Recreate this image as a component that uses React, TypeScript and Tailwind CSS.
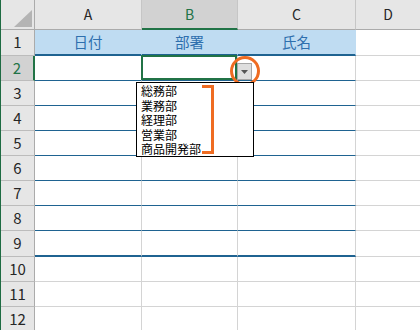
const COLS = ["A", "B", "C"];
const HEADINGS = ["日付", "部署", "氏名"];
const ITEMS = ["総務部", "業務部", "経理部", "営業部", "商品開発部"];
const ROWS = [1, 2, 3, 4, 5, 6, 7, 8, 9, 10, 11, 12];

// column widths, all border-box with a right gridline
const colW = ["w-[107px]", "w-[96px]", "w-[118px]"];

function dataCellClass(row: number) {
  if (row === 1) return "bg-[#bfdcf2] border-b-2 border-b-[#1f6391] border-r border-r-[#bfdcf2]";
  if (row === 9) return "border-b-2 border-b-[#1f6391] border-r border-r-[#d4d4d4]";
  if (row < 9) return "border-b border-b-[#1f6391] border-r border-r-[#d4d4d4]";
  return "border-b border-b-[#d4d4d4] border-r border-r-[#d4d4d4]";
}

export default function App() {
  return (
    <div className="relative flex w-[420px] h-[330px] overflow-hidden bg-white font-['Noto_Sans_CJK_JP',sans-serif]">
      <div className="w-px bg-[#1e6b42]" />
      <div className="flex flex-1 flex-col">
        {/* column headers */}
        <div className="flex h-[30px] shrink-0">
          <div className="relative w-[34px] bg-[#e6e6e6] border-r border-b border-[#ababab]">
            <svg className="absolute inset-0" width="34" height="30">
              <polygon points="13,27 31,27 31,10" fill="#b4b4b4" />
            </svg>
          </div>
          {COLS.map((c, i) =>
            c === "B" ? (
              <div
                key={c}
                className={`${colW[i]} flex items-center justify-center bg-[#d2d2d2] border-r border-r-[#c6c6c6] border-b-2 border-b-[#217346] text-[14px] text-[#217346]`}
              >
                {c}
              </div>
            ) : (
              <div
                key={c}
                className={`${colW[i]} flex items-center justify-center bg-[#e6e6e6] border-r border-r-[#c6c6c6] border-b border-b-[#ababab] text-[14px] text-[#262626]`}
              >
                {c}
              </div>
            )
          )}
          <div className="flex flex-1 items-center justify-center bg-[#e6e6e6] border-b border-b-[#ababab] text-[14px] text-[#262626]">
            D
          </div>
        </div>

        {ROWS.map((r) => (
          <div key={r} className={`flex shrink-0 ${r === 1 || r === 9 ? "h-[26px]" : "h-[25px]"}`}>
            <div
              className={
                r === 2
                  ? "w-[34px] flex items-center justify-center bg-[#d2d2d2] border-b border-b-[#bcbcbc] border-r-2 border-r-[#217346] text-[15px] text-[#217346]"
                  : "w-[34px] flex items-center justify-center bg-[#e6e6e6] border-b border-b-[#bcbcbc] border-r border-r-[#ababab] text-[15px] text-[#262626]"
              }
            >
              {r}
            </div>
            {COLS.map((c, i) => (
              <div
                key={c}
                className={`relative ${colW[i]} flex items-center justify-center text-[14.5px] text-[#2e6fae] ${dataCellClass(r)}`}
              >
                {r === 1 && HEADINGS[i]}
                {r === 2 && c === "B" && (
                  <div className="absolute -left-px -top-px right-0 bottom-0 border-2 border-[#217346]" />
                )}
              </div>
            ))}
            <div className="flex-1 border-b border-b-[#d4d4d4]" />
          </div>
        ))}
      </div>

      {/* validation dropdown button */}
      <div className="absolute left-[237px] top-[63px] flex h-[17px] w-[15px] items-center justify-center border border-[#a6a6a6] bg-[#dedede]">
        <svg width="7" height="4" viewBox="0 0 7 4">
          <polygon points="0,0 7,0 3.5,4" fill="#555" />
        </svg>
      </div>
      <div className="absolute left-[230px] top-[56px] h-[30px] w-[30px] rounded-full border-[3px] border-[#ef6c22]" />

      {/* dropdown list */}
      <div className="absolute left-[136px] top-[82px] h-[75px] w-[118px] border border-black bg-white pl-[4px] pt-px text-[12px] leading-[14.5px] text-black">
        {ITEMS.map((it) => (
          <div key={it}>{it}</div>
        ))}
      </div>
      <div className="absolute left-[202px] top-[85px] h-[69px] w-[12px] border-y-[3px] border-r-[3px] border-[#ef6c22]" />
    </div>
  );
}
